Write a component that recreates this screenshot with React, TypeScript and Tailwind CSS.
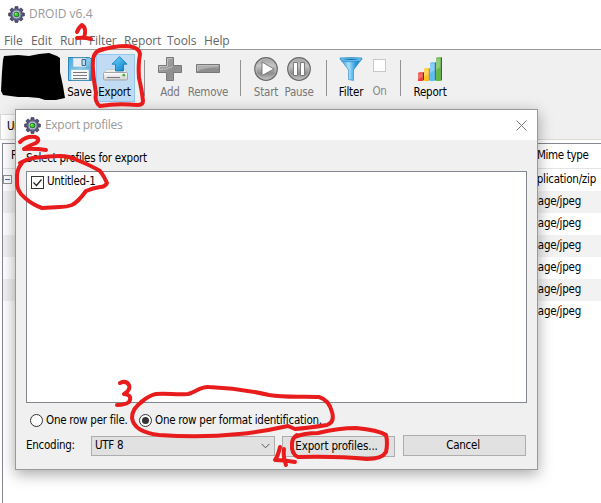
import type { ReactNode } from 'react';

const ui = "font-['DejaVu_Sans_Condensed','DejaVu_Sans',sans-serif] [font-stretch:condensed]";

function Gear() {
  return (
    <svg width="17" height="17" viewBox="0 0 17 17" className="block shrink-0">
      {[0, 45, 90, 135].map((a) => (
        <path key={a} d="M7.1.6h2.8l.5 3v9.8l-.5 3H7.1l-.5-3V3.6z" fill="#55557c" stroke="#29293f" strokeWidth="0.6" transform={`rotate(${a} 8.5 8.5)`} />
      ))}
      <circle cx="8.5" cy="8.5" r="4.9" fill="#7c7ca2" />
      <circle cx="8.5" cy="8.5" r="3.7" fill="#c2c2dc" />
      <circle cx="8.5" cy="8.5" r="2.8" fill="#1c6b22" />
      <circle cx="8.3" cy="8.5" r="2.1" fill="#35cf2b" />
      <circle cx="7.8" cy="7.8" r="0.8" fill="#b7ffa4" />
    </svg>
  );
}

function SaveIcon() {
  return (
    <svg width="24" height="24" viewBox="0 0 24 24">
      <defs>
        <linearGradient id="disk" x2="1" y2="1"><stop stopColor="#43a7dd" /><stop offset=".5" stopColor="#83cbed" /><stop offset="1" stopColor="#2587c5" /></linearGradient>
      </defs>
      <path d="M.5.5h21l2 2v21H.5z" fill="url(#disk)" stroke="#2c83b7" />
      <path d="M5 1h13v9H5z" fill="#e9eff4" stroke="#8db7cf" strokeWidth=".6" />
      <path d="M14 2.5h3.5v6H14z" fill="#b9dbed" stroke="#3e668b" />
      <path d="M3 12.5h18V23H3z" fill="#fafafa" stroke="#86b6cf" strokeWidth=".6" />
      <path d="M5 15.5h14M5 18.5h14M5 21.5h14" stroke="#777" />
    </svg>
  );
}

function ExportIcon() {
  return (
    <svg width="25" height="25" viewBox="0 0 25 25">
      <defs>
        <linearGradient id="up" x2="1" y2="1"><stop stopColor="#71d8ff" /><stop offset="1" stopColor="#087bc4" /></linearGradient>
        <linearGradient id="drive" x2="0" y2="1"><stop stopColor="#fff" /><stop offset="1" stopColor="#cfcfcf" /></linearGradient>
      </defs>
      <path d="M3.5 13.5h18l2.5 3H1z" fill="#ececec" stroke="#b5b5b5" strokeWidth=".5" />
      <rect x=".5" y="16.5" width="24" height="7.5" rx="1" fill="url(#drive)" stroke="#a4a7aa" />
      <path d="M4 21.5h13" stroke="#777" />
      <circle cx="20.8" cy="19.2" r="1.4" fill="#43b535" />
      <path d="m16.5.6 7.5 7.6h-3.5V15h-8V8.2H9z" fill="url(#up)" stroke="#1375ae" strokeWidth=".8" />
    </svg>
  );
}

function Plus() {
  return (
    <svg width="24" height="24" viewBox="0 0 24 24">
      <defs><linearGradient id="metal" x2="1" y2="1"><stop stopColor="#afafaf" /><stop offset=".6" stopColor="#8e8e8e" /><stop offset="1" stopColor="#9c9c9c" /></linearGradient></defs>
      <path d="M8.5.5h7v8h8v7h-8v8h-7v-8h-8v-7h8z" fill="url(#metal)" stroke="#787878" />
      <path d="M14.5 1.5h-5v8h-8v3q8 0 13-3" fill="none" stroke="#bebebe" />
    </svg>
  );
}

function Minus() {
  return (
    <svg width="24" height="24" viewBox="0 0 24 24">
      <path d="M.5 8.5h23v8H.5z" fill="#8e8e8e" stroke="#777" />
      <path d="M1.5 9.5h21v2Q10 11 1.5 15z" fill="#adadad" />
      <path d="M1.5 15V9.5h21" fill="none" stroke="#c0c0c0" />
    </svg>
  );
}

function Player({ pause = false }: { pause?: boolean }) {
  return (
    <svg width="24" height="24" viewBox="0 0 24 24">
      <defs><linearGradient id="ball" x2="0" y2="1"><stop stopColor="#999" /><stop offset=".35" stopColor="#c6c6c6" /><stop offset=".7" stopColor="#8d8d8d" /><stop offset="1" stopColor="#c9c9c9" /></linearGradient></defs>
      <circle cx="12" cy="12" r="11.3" fill="url(#ball)" stroke="#6b6b6b" strokeWidth="1.2" />
      <circle cx="12" cy="12" r="10" fill="none" stroke="#b9b9b9" strokeWidth=".8" />
      {pause ? <path d="M6.5 5.5h4v13h-4zM13.5 5.5h4v13h-4z" fill="#fff" stroke="#707070" strokeWidth=".9" /> : <path d="m8 5 12 7-12 6.5z" fill="#fff" stroke="#737373" strokeWidth=".9" />}
    </svg>
  );
}

function Funnel() {
  return (
    <svg width="24" height="24" viewBox="0 0 24 24">
      <defs><linearGradient id="fun" x2="1"><stop stopColor="#258edb" /><stop offset=".4" stopColor="#a6e1fc" /><stop offset=".7" stopColor="#2f9bde" /><stop offset="1" stopColor="#1676bd" /></linearGradient></defs>
      <path d="M1 1.5 9.5 13v9.5l5 1V13L23 1.5z" fill="url(#fun)" stroke="#2783bf" strokeWidth=".6" />
      <path d="M1 1q11-1 22 0l-1.5 3Q12 5.5 2.5 4z" fill="#68bfec" stroke="#2588c6" strokeWidth=".7" />
      <path d="M4 2q8-.6 16 0-8 2-16 0" fill="#156ea9" />
    </svg>
  );
}

const bars = [
  { front: '#ef3a2c', side: '#b01212', x: 0, y: 15 },
  { front: '#ffc51b', side: '#dd8f00', x: 6, y: 11 },
  { front: '#5fbdf3', side: '#1878c0', x: 12, y: 5 },
  { front: '#62b944', side: '#23761e', x: 18, y: 0 },
];

function Chart() {
  return (
    <svg width="24" height="24" viewBox="0 0 24 24">
      {bars.map(({ front, side, x, y }) => (
        <g key={x}>
          <rect x={x} y={y + 1} width="4.6" height={23 - y} fill={front} />
          <path d={`M${x} ${y + 1}l1.5-1H${x + 6}l-1.4 1z`} fill={front} opacity=".75" />
          <path d={`M${x + 4.6} ${y + 1}l1.4-1V23l-1.4 1z`} fill={side} />
          <path d={`M${x} ${y + 1.5}h4.4v${(24 - y) * 0.35}l-4.4 3z`} fill="#fff" opacity=".28" />
        </g>
      ))}
    </svg>
  );
}

function Tool({ icon, label, box, text = 'text-[#777]' }: { icon: ReactNode; label: string; box: string; text?: string }) {
  return (
    <div className={`flex h-12 shrink-0 flex-col items-center ${box}`}>
      <div className="flex h-[27px] items-center justify-center">{icon}</div>
      <span className={`mt-[3px] whitespace-nowrap text-[11.5px] leading-4 ${text}`}>{label}</span>
    </div>
  );
}

function Separator({ space }: { space: string }) {
  return <div className={`mt-1.5 h-9 w-px shrink-0 bg-[#929292] ${space}`} />;
}

function Toolbar() {
  return (
    <div className="flex h-[60px] items-start bg-[#f0f0f0] pt-1 pl-[66px]">
      <Tool icon={<SaveIcon />} label="Save" box="w-[27px] pt-px" text="mt-[2px]! text-black tracking-[-0.25px]" />
      <Tool icon={<ExportIcon />} label="Export" box="ml-[3px] w-[39px] border border-[#91c8f4] bg-[#bfdcf4]" text="mt-[2px]! mr-[2px] text-black tracking-[-0.25px]" />
      <Separator space="ml-[9px]" />
      <Tool icon={<Plus />} label="Add" box="ml-[13px] w-6 pt-px" text="mt-[2px]! text-[#777] tracking-[-0.25px]" />
      <Tool icon={<Minus />} label="Remove" box="ml-[6px] w-10" text="text-[#777] tracking-[-0.25px]" />
      <Separator space="ml-[12px]" />
      <Tool icon={<Player />} label="Start" box="ml-[13px] w-6 pt-px" text="mt-[2px]! text-[#777] tracking-[-0.15px]" />
      <Tool icon={<Player pause />} label="Pause" box="ml-[6px] w-[30px] pt-px" text="mt-[2px]! text-[#777] tracking-[-0.25px]" />
      <Separator space="ml-[12px]" />
      <Tool icon={<Funnel />} label="Filter" box="ml-[12px] w-6 pt-px" text="mt-[2px]! text-black tracking-[-0.15px]" />
      <Tool icon={<div className="-mt-1.5 size-[13px] border border-[#c8c8c8] bg-white" />} label="On" box="ml-[10px] w-[13px] pt-px" text="mt-px! text-[#888] tracking-[-0.4px]" />
      <Separator space="ml-[14px]" />
      <Tool icon={<Chart />} label="Report" box="ml-[12px] w-[34px] pt-px" text="mt-[2px]! text-black tracking-[-0.2px]" />
    </div>
  );
}

const menu: [string, string][] = [['File', 'w-[27px]'], ['Edit', 'w-[29px]'], ['Run', 'w-[29px]'], ['Filter', 'w-[35px]'], ['Report', 'w-[43px]'], ['Tools', 'w-[37px]'], ['Help', 'w-[30px]']];
const mimes = ['application/zip', 'image/jpeg', 'image/jpeg', 'image/jpeg', 'image/jpeg', 'image/jpeg', 'image/jpeg'];

function ResultsTable() {
  return (
    <div className="ml-[2px] flex-1 border-t border-l border-[#828790] bg-white text-[11.5px] tracking-[-0.25px] text-black">
      <div className="flex h-[25px] items-center justify-between border-b border-[#e5e5e5] pl-2">
        <span>R</span>
        <span className="w-[64px] tracking-[-0.35px]">Mime type</span>
      </div>
      {mimes.map((m, i) => (
        <div key={i} className={`flex h-[22px] items-center justify-between pb-px ${i % 2 ? 'bg-[#f2f2f2]' : 'bg-white'}`}>
          {i === 0 ? <span className="flex size-[9px] items-center justify-center border border-[#919191] bg-white"><span className="h-px w-[5px] bg-[#4466aa]" /></span> : <span />}
          <span className={`flex justify-end whitespace-nowrap ${i ? 'pr-[20px]' : 'pr-[5px]'}`}>{m}</span>
        </div>
      ))}
    </div>
  );
}

function Radio({ checked = false, label, box }: { checked?: boolean; label: string; box: string }) {
  return (
    <label className={`flex items-center gap-[3px] ${box}`}>
      <span className="flex size-[13px] shrink-0 items-center justify-center rounded-full border border-[#333] bg-white">
        {checked && <span className="size-[7px] rounded-full bg-[#333]" />}
      </span>
      <span className="whitespace-nowrap">{label}</span>
    </label>
  );
}

function ExportDialog() {
  return (
    <section className="absolute top-[109px] left-[15px] flex h-[361px] w-[523px] flex-col border border-[#999] bg-[#f0f0f0] text-[11.5px] tracking-[-0.26px] text-black shadow-[0_4px_14px_rgba(0,0,0,0.35)]">
      <header className="flex h-[30px] shrink-0 items-center bg-white pr-[10px] pl-2 font-['Open_Sans',sans-serif] text-xs tracking-[-0.3px] text-[#999] [font-stretch:normal]">
        <Gear />
        <span className="ml-[4px] flex-1">Export profiles</span>
        <svg width="11" height="11" viewBox="0 0 11 11"><path d="m.5.5 10 10m0-10-10 10" stroke="#777" /></svg>
      </header>
      <div className="flex flex-1 flex-col pt-[9px] pr-[10px] pl-[10px]">
        <p className="h-[22px] leading-[18px]">Select profiles for export</p>
        <div className="h-[232px] w-[501px] border border-[#828790] bg-white pt-[3px] pl-1">
          <label className="flex h-[14px] items-center gap-[3px]">
            <span className="flex size-[13px] items-center justify-center border border-[#333] bg-white">
              <svg width="11" height="11" viewBox="0 0 11 11"><path d="m1.5 5.5 3 3 5-6" fill="none" stroke="#222" strokeWidth="1.2" /></svg>
            </span>
            <span className="pb-px">Untitled-1</span>
          </label>
        </div>
        <div className="mt-[10px] flex h-[15px] items-center pl-1">
          <Radio label="One row per file." box="w-[109px]" />
          <Radio checked label="One row per format identification." box="" />
        </div>
        <div className="mt-[7px] flex items-start">
          <span className="w-[65px] leading-[21px]">Encoding:</span>
          <div className="mt-px flex h-5 w-[184px] items-center justify-between border border-[#adadad] bg-[#e1e1e1] pr-1 pl-[3px]">
            <span>UTF 8</span>
            <svg width="9" height="6" viewBox="0 0 9 6"><path d="m.5.8 4 4 4-4" fill="none" stroke="#555" /></svg>
          </div>
          <button className="mt-px ml-[7px] h-[21px] w-[113px] border border-[#adadad] bg-[#e1e1e1] pr-[4px] pb-px leading-[18px] tracking-[-0.15px]">Export profiles...</button>
          <button className="ml-[8px] h-[21px] w-[123px] border border-[#adadad] bg-[#e1e1e1] pr-[3px] leading-[19px]">Cancel</button>
        </div>
      </div>
    </section>
  );
}

function Markup() {
  return (
    <svg className="pointer-events-none absolute inset-0" width="601" height="503" viewBox="0 0 601 503">
      <path d="M4 56 18 55 29 56 39 54 49 53 57 56 60 58 60 72 63 86 65 98 56 100 45 100 39 98 28 97 18 97 3 95 1 91 2 72 3 60z" fill="#000" />
      <g fill="none" stroke="#e81c1c" strokeWidth="4" strokeLinecap="round" strokeLinejoin="round">
        <path d="M77 32Q79 27 82 25Q87 28 84 38M77 38Q84 37 91 39" />
        <path d="M98 51Q112 46 127 46Q139 47 140 54Q138 65 139 78Q142 91 143 101Q143 105 137 105Q117 103 100 106Q94 102 96 93Q92 71 93 59Q94 51 103 49" />
        <path d="M20 142Q26 136 35 137Q41 139 36 143Q26 147 24 149Q34 148 46 150" />
        <path d="M20 163Q25 160 33 158Q50 156 60 156Q69 156 77 160Q92 166 100 171Q104 176 107 183Q105 187 100 187Q93 188 86 191Q78 202 72 205Q67 207 60 207L42 208Q33 205 25 198Q16 191 17 180Q16 170 22 163" />
        <path d="M120 383Q126 380 129 385Q131 390 124 394Q133 395 129 402Q125 405 117 405" />
        <path d="M141 402Q150 395 156 394C167 393 176 395 188 394C196 392 201 386 209 387Q239 388 269 395C287 398 304 396 319 397Q329 400 332 412Q335 422 327 425Q308 428 295 429L288 426Q261 432 239 434Q201 438 159 435Q134 432 132 418Q132 408 143 401" />
        <path d="M295 437Q304 433 318 433Q339 428 356 428Q378 430 386 435Q388 443 386 452Q382 459 367 459Q338 456 298 457Q291 454 292 444Q292 438 297 435" />
        <path d="M280 447Q278 456 275 460Q284 460 295 462M284 449Q283 457 286 465" />
      </g>
    </svg>
  );
}

export default function App() {
  return (
    <main className={`relative flex h-[503px] w-[601px] flex-col overflow-hidden bg-white ${ui}`}>
      <header className="flex h-7 shrink-0 items-center gap-[4px] pl-2 font-['Open_Sans',sans-serif] text-xs text-[#999] [font-stretch:normal]">
        <Gear /><span>DROID v6.4</span>
      </header>
      <nav className="flex h-[21px] shrink-0 items-center pt-1 pl-1 font-['Open_Sans',sans-serif] text-xs tracking-[-0.1px] text-[#666] [font-stretch:normal]">
        {menu.map(([m, w]) => <span key={m} className={w}>{m}</span>)}
      </nav>
      <div className="h-px shrink-0 bg-[#999]" />
      <Toolbar />
      <div className="flex h-[29px] shrink-0 items-end bg-[#f0f0f0]">
        <div className="h-[25px] w-[100px] border-t border-l border-[#d9d9d9] bg-white pt-[3px] pl-[6px] text-[11.5px] tracking-[-0.5px]">Un</div>
      </div>
      <div className="flex flex-1 flex-col border-t border-[#d9d9d9] pt-[3px]"><ResultsTable /></div>
      <ExportDialog />
      <Markup />
    </main>
  );
}
